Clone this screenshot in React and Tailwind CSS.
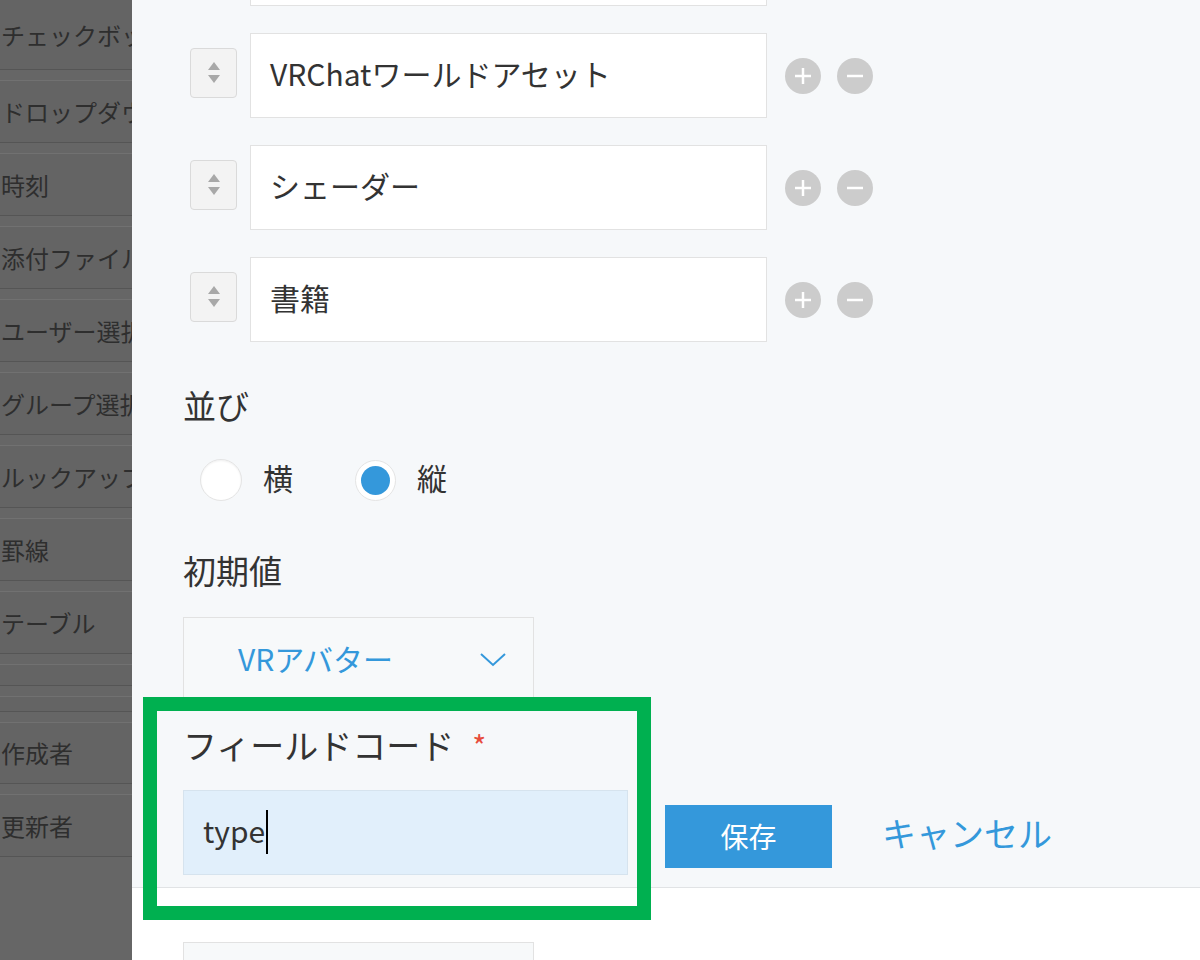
import React from "react";

const sideItems = [
  { label: "チェックボックス", h: "h-[70px]" },
  { label: "ドロップダウン", h: "h-[63px]" },
  { label: "時刻", h: "h-[63px]" },
  { label: "添付ファイル", h: "h-[63px]" },
  { label: "ユーザー選択", h: "h-[63px]" },
  { label: "グループ選択", h: "h-[63px]" },
  { label: "ルックアップ", h: "h-[63px]" },
  { label: "罫線", h: "h-[63px]" },
  { label: "テーブル", h: "h-[63px]" },
  { label: "", h: "h-[22px]" },
  { label: "", h: "h-[16px]" },
  { label: "作成者", h: "h-[62px]" },
  { label: "更新者", h: "h-[63px]" },
];

function Stepper() {
  return (
    <div className="w-[47px] h-[50px] rounded-[4px] border border-[#dadada] bg-[#f3f3f3] flex flex-col items-center justify-center gap-[5px] -mt-[6px]">
      <svg width="12" height="8" viewBox="0 0 12 8">
        <polygon points="6,0 12,8 0,8" fill="#a8a8a8" />
      </svg>
      <svg width="12" height="8" viewBox="0 0 12 8">
        <polygon points="0,0 12,0 6,8" fill="#a8a8a8" />
      </svg>
    </div>
  );
}

function RoundBtn({ minus }) {
  return (
    <div className="w-[36px] h-[36px] rounded-full bg-[#cccccc] flex items-center justify-center">
      <svg width="20" height="20" viewBox="0 0 20 20">
        <line x1="2" y1="10" x2="18" y2="10" stroke="#fff" strokeWidth="2.5" />
        {!minus && <line x1="10" y1="2" x2="10" y2="18" stroke="#fff" strokeWidth="2.5" />}
      </svg>
    </div>
  );
}

function OptionRow({ text, hidden }) {
  return (
    <div className="flex items-center h-[85px]">
      <div className="w-[67px] pl-[7px] flex items-center">{!hidden && <Stepper />}</div>
      <div className="w-[517px] h-[85px] bg-white border border-[#e2e2e2] flex items-center pl-[19px] pb-[5px] text-[30px] text-[#333]">
        {text}
      </div>
      <div className="flex items-center gap-[16px] ml-[18px]">
        {!hidden && (
          <>
            <RoundBtn />
            <RoundBtn minus />
          </>
        )}
      </div>
    </div>
  );
}

export default function App() {
  return (
    <div className="relative w-[1200px] h-[960px] overflow-hidden flex bg-white font-['Noto_Sans_CJK_JP','Noto_Sans',sans-serif]">
      {/* dimmed field palette */}
      <aside className="w-[132px] shrink-0 bg-[#666666] flex flex-col gap-[10px] overflow-hidden">
        {sideItems.map((it, i) => (
          <div
            key={i}
            className={`${it.h} shrink-0 flex items-center pl-[1px] text-[24px] text-[#2e2e2e] whitespace-nowrap bg-[#646464] border-b border-[#555555] ${i > 0 ? "border-t border-t-[#717171]" : ""}`}
          >
            {it.label}
          </div>
        ))}
      </aside>

      {/* settings panel */}
      <main className="flex-1 flex flex-col">
        <section className="bg-[#f6f8fa] border-b border-[#e1e3e5] pl-[51px] pb-[12px]">
          <div className="flex flex-col gap-[27px] -mt-[79px]">
            <OptionRow text="" hidden />
            <OptionRow text="VRChatワールドアセット" />
            <OptionRow text="シェーダー" />
            <OptionRow text="書籍" />
          </div>

          <div className="mt-[39px] text-[33px] leading-[48px] text-[#333]">並び</div>
          <div className="mt-[30px] flex items-center h-[42px] pl-[17px]">
            <div className="w-[42px] h-[42px] rounded-full bg-white border border-[#e4e4e4] shadow-[inset_0_1px_2px_rgba(0,0,0,0.06)]" />
            <span className="ml-[21px] -mt-[5px] text-[30px] text-[#333]">横</span>
            <div className="ml-[62px] w-[41px] h-[41px] rounded-full bg-white border border-[#e4e4e4] flex items-center justify-center">
              <div className="w-[29px] h-[29px] rounded-full bg-[#3498db]" />
            </div>
            <span className="ml-[21px] -mt-[5px] text-[30px] text-[#333]">縦</span>
          </div>

          <div className="mt-[45px] text-[33px] leading-[48px] text-[#333]">初期値</div>
          <div className="mt-[23px] w-[351px] h-[85px] bg-[#f7f9fa] border border-[#e2e2e2] flex items-center pl-[54px] pr-[26px] justify-between">
            <span className="text-[30px] text-[#3498db] -mt-[3px]">VRアバター</span>
            <svg width="28" height="16" viewBox="0 0 28 16">
              <polyline points="2,2 14,13 26,2" fill="none" stroke="#3498db" strokeWidth="2" />
            </svg>
          </div>

          <div className="mt-[19px] text-[34px] leading-[48px] text-[#333] flex items-center">
            フィールドコード<span className="ml-[18px] text-[30px] text-[#e74c3c]">*</span>
          </div>
          <div className="mt-[21px] flex items-center">
            <div className="w-[445px] h-[85px] bg-[#e1effb] border border-[#d6e3ee] flex items-center pl-[19px] pb-[5px] text-[30px] text-[#333]">
              type
              <span className="inline-block w-[2px] h-[44px] bg-black ml-[1px] mt-[4px]" />
            </div>
            <button className="ml-[37px] mt-[7px] w-[167px] h-[63px] bg-[#3498db] text-white text-[28px]">保存</button>
            <span className="ml-[50px] text-[34px] text-[#3498db]">キャンセル</span>
          </div>
        </section>

        <div className="pl-[51px] pt-[54px]">
          <div className="w-[351px] h-[60px] bg-[#f7f9fa] border border-[#e2e2e2]" />
        </div>
      </main>

      {/* annotation frame */}
      <div className="absolute left-[143px] top-[697px] w-[508px] h-[223px] border-[14px] border-[#00b050] pointer-events-none" />
    </div>
  );
}
